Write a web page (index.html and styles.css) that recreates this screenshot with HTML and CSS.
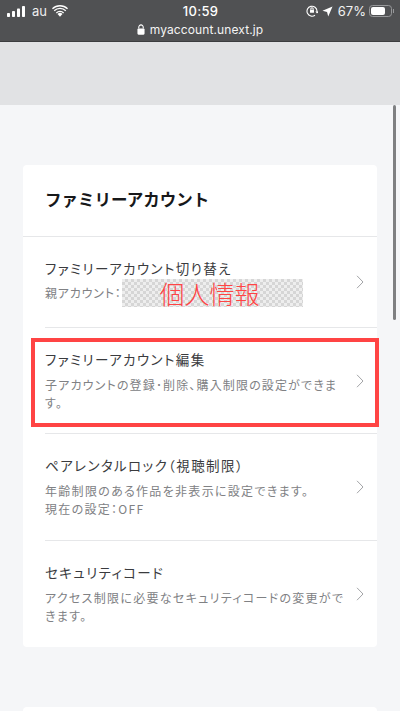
FILE: index.html
```html
<!DOCTYPE html>
<html lang="ja">
<head>
<meta charset="utf-8">
<title>ファミリーアカウント</title>
<link rel="stylesheet" href="styles.css">
</head>
<body>
<header class="browser">
  <div class="status">
    <div class="status-side">
      <svg class="signal" viewBox="0 0 18 11" width="18" height="11"><rect x="0" y="7" width="3" height="4" rx=".8" /><rect x="5" y="5" width="3" height="6" rx=".8" /><rect x="10" y="2.500" width="3" height="8.500" rx=".8" /><rect x="15" y="0" width="3" height="11" rx=".8" /></svg>
      <span class="carrier">au</span>
      <svg class="wifi" viewBox="0 0 18 13" width="16" height="12"><path d="M9 13 6.200 9.900a4 4 0 0 1 5.600 0Z" /><path d="M4.400 8.100a6.600 6.600 0 0 1 9.200 0l-1 1.100a5.100 5.100 0 0 0-7.200 0Z" /><path d="M2 5.700a10 10 0 0 1 14 0l-1 1.100a8.500 8.500 0 0 0-12 0Z" /><path d="M0 3.500a13 13 0 0 1 18 0l-1 1.100a11.500 11.500 0 0 0-16 0Z" /></svg>
    </div>
    <div class="time">10:59</div>
    <div class="status-side status-right">
      <svg class="orient" viewBox="0 0 12 12" width="12" height="12"><path d="M9 10.200A5 5 0 1 1 11 6v1" /><path class="fill" d="M9.300 6.400h3.400L11 8.600Z" /><rect x="4" y="4.800" width="4" height="3" rx=".5" class="fill" /><path d="M4.800 4.800V4a1.200 1.200 0 0 1 2.400 0v.8" /></svg>
      <svg class="arrow-loc" viewBox="0 0 12 12" width="11" height="11"><path d="M11.500 .5 .5 5.200l5 1.300 1.300 5Z" /></svg>
      <span class="pct">67%</span>
      <span class="battery"><span class="battery-fill"></span></span><span class="battery-cap"></span>
    </div>
  </div>
  <div class="url">
    <svg class="lock" viewBox="0 0 9 12" width="8" height="11"><path d="M2 5V3.300a2.500 2.500 0 0 1 5 0V5" /><rect x=".5" y="4.800" width="8" height="7" rx="1.200" class="fill" /></svg>
    <span>myaccount.unext.jp</span>
  </div>
</header>
<div class="band"></div>
<main class="page">
  <section class="card">
    <h1 class="card-title">ファミリーアカウント</h1>
    <div class="row row-first">
      <div class="row-text">
        <div class="row-title">ファミリーアカウント切り替え</div>
        <div class="row-sub parent"><span>親アカウント：</span><span class="masked">個人情報</span></div>
      </div>
      <svg class="chev" viewBox="0 0 8 14" width="8" height="14"><path d="M1 .8 7 7l-6 6.200" /></svg>
    </div>
    <div class="row row-edit">
      <div class="row-text">
        <div class="row-title">ファミリーアカウント編集</div>
        <div class="row-sub">子アカウントの登録･削除、購入制限の設定ができます。</div>
      </div>
      <svg class="chev" viewBox="0 0 8 14" width="8" height="14"><path d="M1 .8 7 7l-6 6.200" /></svg>
    </div>
    <div class="row">
      <div class="row-text">
        <div class="row-title">ペアレンタルロック（視聴制限）</div>
        <div class="row-sub">年齢制限のある作品を非表示に設定できます。<br>現在の設定：OFF</div>
      </div>
      <svg class="chev" viewBox="0 0 8 14" width="8" height="14"><path d="M1 .8 7 7l-6 6.200" /></svg>
    </div>
    <div class="row">
      <div class="row-text">
        <div class="row-title">セキュリティコード</div>
        <div class="row-sub">アクセス制限に必要なセキュリティコードの変更ができます。</div>
      </div>
      <svg class="chev" viewBox="0 0 8 14" width="8" height="14"><path d="M1 .8 7 7l-6 6.200" /></svg>
    </div>
  </section>
  <section class="card card-next"></section>
</main>
<div class="scrollbar"></div>
<div class="highlight"></div>
</body>
</html>
```
FILE: styles.css
```css
* { box-sizing: border-box; }
html, body { margin: 0; padding: 0; }
body {
  width: 400px;
  height: 711px;
  overflow: hidden;
  position: relative;
  background: #f5f6f8;
  font-family: "Noto Sans CJK JP", "Noto Sans", sans-serif;
}
.browser {
  height: 42px;
  background: #505153;
  border-bottom: 1px solid #3c3d3f;
  color: #fff;
  font-family: Inter, "Liberation Sans", sans-serif;
}
.status {
  height: 21px;
  padding: 1px 6px 0 7px;
  display: grid;
  grid-template-columns: 1fr auto 1fr;
  align-items: center;
}
.status-side { display: flex; align-items: center; }
.status-right { justify-content: flex-end; }
.signal, .wifi, .arrow-loc { fill: #fff; }
.signal { margin-right: 7px; }
.carrier { font-size: 13px; margin-right: 5px; color: #eee; }
.time { font-size: 13px; font-weight: 500; letter-spacing: .3px; }
.orient { fill: none; stroke: #fff; stroke-width: 1.1; margin-right: 4px; }
.orient .fill { fill: #fff; stroke: none; }
.arrow-loc { margin-right: 5px; }
.pct { font-size: 13px; margin-right: 3px; color: #f2f2f2; }
.battery {
  width: 23px;
  height: 12px;
  border: 1px solid #97989a;
  border-radius: 3.500px;
  padding: 1px;
  display: flex;
}
.battery-fill { width: 14px; background: #fff; border-radius: 2px; }
.battery-cap { width: 1px; height: 4px; background: #97989a; margin-left: 1px; }
.url {
  height: 17px;
  display: flex;
  align-items: center;
  justify-content: center;
  gap: 5px;
  font-size: 12px;
  letter-spacing: .1px;
  color: #f4f4f4;
}
.lock { fill: none; stroke: #fff; stroke-width: 1.2; }
.lock .fill { fill: #fff; stroke: none; }
.band { height: 63px; background: #e1e2e4; }
.page { padding: 60px 23px 0; }
.card {
  background: #fff;
  border-radius: 4px;
  width: 354px;
}
.card-title {
  margin: 0;
  height: 72px;
  padding: 22px 22px 0;
  font-size: 16.500px;
  font-weight: 700;
  line-height: 24px;
  color: #17181a;
  border-bottom: 1px solid #e6e7e9;
}
.row {
  margin-left: 22px;
  padding-right: 13px;
  height: 107px;
  display: flex;
  align-items: center;
  justify-content: space-between;
  border-bottom: 1px solid #e6e7e9;
}
.row:last-child { border-bottom: 0; height: 106px; }
.row-first { height: 91px; }
.row-edit { height: 106px; }
.row-text { width: 300px; padding-bottom: 1px; }
.row-first .row-text { padding-bottom: 0; }
.row-title {
  font-size: 13.500px;
  line-height: 20px;
  letter-spacing: 1.400px;
  font-feature-settings: "palt";
  color: #3a3b3e;
}
.row-sub {
  margin-top: 7px;
  font-size: 12px;
  line-height: 18px;
  letter-spacing: 1.300px;
  font-feature-settings: "palt";
  color: #808184;
  word-break: break-all;
}
.row-edit .row-sub { letter-spacing: 1.150px; }
.parent { display: flex; align-items: center; margin-top: 1px; height: 28px; letter-spacing: .8px; white-space: nowrap; }
.parent span:first-child { width: 77px; }
.masked {
  width: 181px;
  height: 28px;
  padding-right: 6px;
  font-size: 25px;
  font-weight: 300;
  line-height: 28px;
  text-align: center;
  letter-spacing: 0;
  font-feature-settings: normal;
  color: #ff4444;
  background-color: #eeeeee;
  background-image:
    linear-gradient(45deg, #d6d6d6 25%, transparent 25%, transparent 75%, #d6d6d6 75%),
    linear-gradient(45deg, #d6d6d6 25%, transparent 25%, transparent 75%, #d6d6d6 75%);
  background-size: 6px 6px;
  background-position: 0 0, 3px 3px;
}
.chev { fill: none; stroke: #a3a4a7; stroke-width: 1; flex: none; }
.card-next { height: 5px; margin-top: 60px; border-radius: 4px 4px 0 0; }
.scrollbar {
  position: absolute;
  left: 393px;
  top: 105px;
  width: 3px;
  height: 215px;
  border-radius: 2px;
  background: #7f8082;
}
.highlight {
  position: absolute;
  left: 31px;
  top: 338px;
  width: 348px;
  height: 89px;
  border: 4px solid #ff4444;
}
```
